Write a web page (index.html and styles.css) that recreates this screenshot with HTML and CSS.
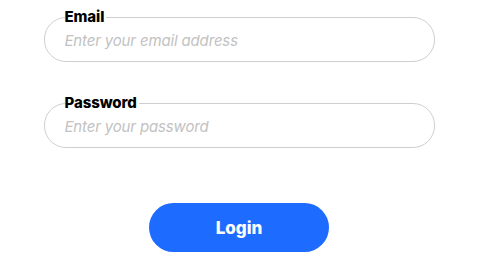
FILE: index.html
```html
<!DOCTYPE html>
<html lang="en">
<head>
<meta charset="utf-8">
<title>Login</title>
<link rel="stylesheet" href="styles.css">
</head>
<body>
<form class="login-form">
  <fieldset class="field">
    <legend class="field-label">Email</legend>
    <input class="field-input" type="email" placeholder="Enter your email address">
  </fieldset>
  <fieldset class="field">
    <legend class="field-label">Password</legend>
    <input class="field-input" type="password" placeholder="Enter your password">
  </fieldset>
  <div class="actions">
    <button class="login-btn" type="button">Login</button>
  </div>
</form>
</body>
</html>
```

FILE: styles.css
```css
html, body {
  margin: 0;
  padding: 0;
  background: #ffffff;
}
body {
  font-family: Inter, "Liberation Sans", Arial, sans-serif;
}
.login-form {
  width: 391px;
  margin: 0 auto;
  padding-top: 9px;
  display: flex;
  flex-direction: column;
}
.field {
  margin: 0 0 33px 0;
  padding: 0 18px 0 20px;
  border: 1px solid #cfcfcf;
  border-radius: 22px;
  min-width: 0;
}
.field:last-of-type {
  margin-bottom: 0;
}
.field-label {
  padding: 0 2px 0 0;
  font-size: 15px;
  line-height: 16px;
  font-weight: 800;
  color: #000000;
  letter-spacing: -0.1px;
}
.field-input {
  display: block;
  width: 100%;
  height: 30px;
  margin: 0 0 6px 0;
  padding: 0;
  border: none;
  outline: none;
  background: transparent;
  font-family: Inter, "Liberation Sans", Arial, sans-serif;
  font-size: 15px;
  color: #333;
}
.field-input::placeholder {
  color: #c2c2c2;
  font-style: italic;
  letter-spacing: -0.15px;
}
.actions {
  display: flex;
  justify-content: center;
  padding-top: 55px;
}
.login-btn {
  width: 180px;
  height: 49px;
  border: none;
  border-radius: 25px;
  background: #1e6bff;
  color: #ffffff;
  font-family: Inter, "Liberation Sans", Arial, sans-serif;
  font-size: 17px;
  font-weight: 800;
  cursor: pointer;
  padding: 0;
}
```
